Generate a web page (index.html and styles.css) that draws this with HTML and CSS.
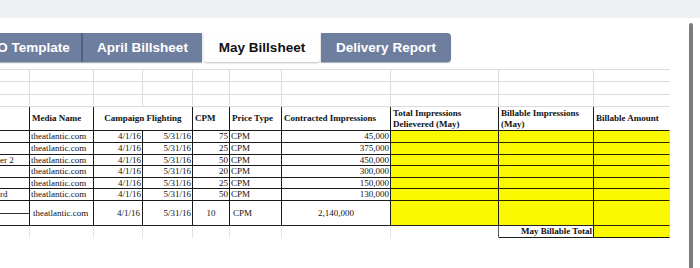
FILE: index.html
```html
<!DOCTYPE html>
<html>
<head>
<meta charset="utf-8">
<link rel="stylesheet" href="styles.css">
</head>
<body>
<div class="topbar"></div>
<div class="sheet">
  <div class="tabs">
    <div class="tab tab-po">PO Template</div>
    <div class="tab tab-april">April Billsheet</div>
    <div class="tab tab-may active">May Billsheet</div>
    <div class="tab tab-delivery">Delivery Report</div>
  </div>
  <div class="grid">
    <!-- blank rows -->
    <div class="c g"></div><div class="c g"></div><div class="c g"></div><div class="c g"></div><div class="c g"></div><div class="c g"></div><div class="c g"></div><div class="c g"></div><div class="c g"></div><div class="c g nr"></div>
    <div class="c g"></div><div class="c g"></div><div class="c g"></div><div class="c g"></div><div class="c g"></div><div class="c g"></div><div class="c g"></div><div class="c g"></div><div class="c g"></div><div class="c g nr"></div>
    <div class="c g"></div><div class="c g"></div><div class="c g"></div><div class="c g"></div><div class="c g"></div><div class="c g"></div><div class="c g"></div><div class="c g"></div><div class="c g"></div><div class="c g nr"></div>
    <!-- header -->
    <div class="c h"></div>
    <div class="c h hl">Media Name</div>
    <div class="c h hc span2">Campaign Flighting</div>
    <div class="c h hl">CPM</div>
    <div class="c h hl">Price Type</div>
    <div class="c h hl">Contracted Impressions</div>
    <div class="c h hl">Total Impressions<br>Delievered (May)</div>
    <div class="c h hl">Billable Impressions<br>(May)</div>
    <div class="c h hl nr">Billable Amount</div>
    <!-- data rows -->
    <div class="c d"></div><div class="c d l">theatlantic.com</div><div class="c d r">4/1/16</div><div class="c d r">5/31/16</div><div class="c d r">75</div><div class="c d l">CPM</div><div class="c d r">45,000</div><div class="c d y"></div><div class="c d y"></div><div class="c d y nr"></div>
    <div class="c d"></div><div class="c d l">theatlantic.com</div><div class="c d r">4/1/16</div><div class="c d r">5/31/16</div><div class="c d r">25</div><div class="c d l">CPM</div><div class="c d r">375,000</div><div class="c d y"></div><div class="c d y"></div><div class="c d y nr"></div>
    <div class="c d cut">er 2</div><div class="c d l">theatlantic.com</div><div class="c d r">4/1/16</div><div class="c d r">5/31/16</div><div class="c d r">50</div><div class="c d l">CPM</div><div class="c d r">450,000</div><div class="c d y"></div><div class="c d y"></div><div class="c d y nr"></div>
    <div class="c d"></div><div class="c d l">theatlantic.com</div><div class="c d r">4/1/16</div><div class="c d r">5/31/16</div><div class="c d r">20</div><div class="c d l">CPM</div><div class="c d r">300,000</div><div class="c d y"></div><div class="c d y"></div><div class="c d y nr"></div>
    <div class="c d"></div><div class="c d l">theatlantic.com</div><div class="c d r">4/1/16</div><div class="c d r">5/31/16</div><div class="c d r">25</div><div class="c d l">CPM</div><div class="c d r">150,000</div><div class="c d y"></div><div class="c d y"></div><div class="c d y nr"></div>
    <div class="c d cut">rd</div><div class="c d l">theatlantic.com</div><div class="c d r">4/1/16</div><div class="c d r">5/31/16</div><div class="c d r">50</div><div class="c d l">CPM</div><div class="c d r">130,000</div><div class="c d y"></div><div class="c d y"></div><div class="c d y nr"></div>
    <!-- last row -->
    <div class="c d last split"><span class="half"></span></div>
    <div class="c d l last pad">theatlantic.com</div>
    <div class="c d r last pr">4/1/16</div>
    <div class="c d r last">5/31/16</div>
    <div class="c d ctr last">10</div>
    <div class="c d l last pad">CPM</div>
    <div class="c d ctr last">2,140,000</div>
    <div class="c d y last"></div><div class="c d y last"></div><div class="c d y last nr"></div>
    <!-- total row -->
    <div class="c t"></div><div class="c t"></div><div class="c t"></div><div class="c t"></div><div class="c t"></div><div class="c t"></div><div class="c t"></div><div class="c t"></div>
    <div class="c t total">May Billable Total</div>
    <div class="c t ty nr"></div>
  </div>
</div>
<div class="scrollbar"></div>
</body>
</html>
```

FILE: styles.css
```css
html, body {
  margin: 0;
  padding: 0;
  background: #ffffff;
  width: 700px;
  height: 268px;
  overflow: hidden;
}

.topbar {
  height: 18px;
  background: #eff0f2;
}

.sheet {
  padding-top: 15px;
}

.tabs {
  display: flex;
  height: 29px;
  margin-left: -23px;
  font-family: "Liberation Sans", Arial, sans-serif;
  font-weight: bold;
  font-size: 13.5px;
}

.tab {
  box-sizing: border-box;
  display: flex;
  align-items: center;
  justify-content: center;
  background: #6e7e9f;
  color: #ffffff;
  box-shadow: 0 1px 1px rgba(60, 70, 90, 0.45);
  white-space: nowrap;
}

.tab-po {
  width: 106px;
  border-right: 2px solid #56627c;
}

.tab-april {
  width: 119px;
}

.tab-may {
  width: 116px;
  margin-left: 2px;
  margin-right: 1px;
  background: #ffffff;
  color: #111111;
  box-shadow: 0 1px 2px rgba(0, 0, 0, 0.25);
  border-radius: 0 0 3px 3px;
}

.tab-delivery {
  width: 130px;
  border-radius: 0 4px 4px 0;
}

.grid {
  margin-top: 7px;
  display: grid;
  width: 670px;
  grid-template-columns: 30px 64px 49px 50px 37px 52px 109px 108px 95px 76px;
  grid-template-rows: 12px 13px 12px 24px 12px 12px 11px 12px 11px 12px 25px 12px;
  border-top: 1px solid #dcdcdf;
  font-family: "Liberation Serif", "Times New Roman", serif;
  font-size: 9px;
  color: #111111;
}

.c {
  box-sizing: border-box;
  border-right: 1px solid #dcdcdf;
  border-bottom: 1px solid #dcdcdf;
  display: flex;
  align-items: center;
  white-space: nowrap;
  overflow: hidden;
  line-height: 11px;
}

.c.nr {
  border-right-color: transparent;
}

.h {
  border-right-color: #1a1a1a;
  border-bottom-color: #1a1a1a;
  font-weight: bold;
  padding-left: 2px;
  line-height: 11px;
}

.h:first-child,
.h.nr {
  border-right-color: transparent;
}

.hc {
  justify-content: center;
  padding-left: 0;
}

.span2 {
  grid-column: span 2;
}

.d {
  border-right-color: #1a1a1a;
  border-bottom-color: #1a1a1a;
}

.d.nr {
  border-right-color: transparent;
}

.l {
  padding-left: 1px;
}

.r {
  justify-content: flex-end;
  padding-right: 1px;
}

.ctr {
  justify-content: center;
}

.cut {
  padding-left: 0;
}

.y {
  background: #fbf900;
  border-bottom-color: #262400;
}

.last {
  border-bottom: 1px solid #222222;
}

.last.pad {
  padding-left: 3px;
}

.last.pr {
  padding-right: 2px;
}

.half {
  display: block;
  width: 100%;
  height: 0;
  border-top: 1px solid #333333;
}

.t {
  border-right-color: #e3e3e6;
  border-bottom-color: transparent;
}

.t:nth-last-child(3) {
  border-right-color: #555555;
}

.total {
  font-weight: bold;
  justify-content: flex-end;
  padding-right: 1px;
  border-right-color: #1a1a1a;
  border-bottom: 1px solid #1a1a1a;
}

.ty {
  background: #fbf900;
  border-bottom: 1px solid #1a1a1a;
}

.scrollbar {
  position: absolute;
  left: 689px;
  top: 23px;
  width: 4px;
  height: 250px;
  background: #7d7d7d;
  border-radius: 2px;
}
```
